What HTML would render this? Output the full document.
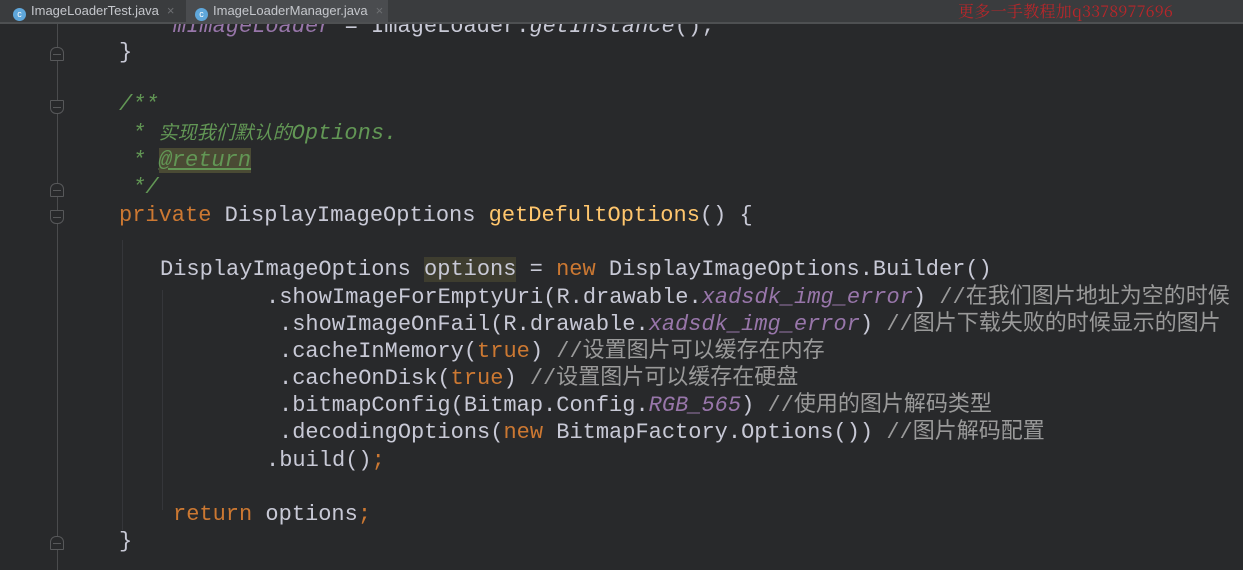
<!DOCTYPE html>
<html><head><meta charset="utf-8"><style>
html,body{margin:0;padding:0}
body{width:1243px;height:570px;background:#28292b;position:relative;overflow:hidden;font-family:"Liberation Mono","Noto Sans CJK SC",monospace;font-size:22px;color:#c8c9d6}
.tabs{position:absolute;left:0;top:0;width:1243px;height:22px;background:#3a3c3e;border-bottom:2px solid #4e5052;font-family:"Liberation Sans",sans-serif;font-size:13px;color:#c5c7cc;z-index:2}
.tab{position:absolute;top:0;height:22px;line-height:22px}
.ic{display:inline-block;width:13px;height:13px;border-radius:50%;background:#5fa7db;color:#fff;font-size:9px;line-height:13px;text-align:center;vertical-align:-2px;margin-right:5px}
.x{color:#6d6f72;margin-left:8px}
.wm{position:absolute;left:958px;top:2px;color:#b8262a;font-family:"Noto Serif CJK SC",serif;font-size:16px;line-height:18px;letter-spacing:0.3px}
.l{position:absolute;white-space:pre;line-height:26px;height:26px}
.k{color:#cc7832}.m{color:#ffc66d}.g{color:#629755;font-style:italic}.p{color:#9876aa;font-style:italic}.c{color:#9a9a9a}
.cj{font-size:19px}
.gut{position:absolute;left:57px;top:24px;width:1px;height:546px;background:#4a4b4d}
.fold{position:absolute;left:50px;width:14px;height:14px;border:1px solid #57585a;background:#28292b;box-sizing:border-box}
.fold:after{content:"";position:absolute;left:2px;right:2px;top:6px;height:1px;background:#57585a}
.ig{position:absolute;width:1px;background:#35363a}
</style></head><body>
<div class="tabs">
<div class="tab" style="left:13px"><span class="ic">c</span>ImageLoaderTest.java<span class="x">×</span></div>
<div class="tab" style="left:186px;width:202px;background:#4a4c4f;padding-left:9px;box-sizing:border-box"><span class="ic">c</span>ImageLoaderManager.java<span class="x">×</span></div>
<div class="wm">更多一手教程加q3378977696</div>
</div>
<div class="gut"></div>
<div class="fold" style="top:47px;border-radius:6px 6px 1px 1px"></div>
<div class="fold" style="top:100px;border-radius:1px 1px 6px 6px"></div>
<div class="fold" style="top:183px;border-radius:6px 6px 1px 1px"></div>
<div class="fold" style="top:210px;border-radius:1px 1px 6px 6px"></div>
<div class="fold" style="top:536px;border-radius:6px 6px 1px 1px"></div>
<div class="ig" style="left:122px;top:240px;height:290px"></div>
<div class="ig" style="left:162px;top:290px;height:220px"></div>

<div class="l" style="left:173px;top:14px"><span class="p">mImageLoader</span> = ImageLoader.<i>getInstance</i>();</div>
<div class="l" style="left:119px;top:40px">}</div>
<div class="l g" style="left:119px;top:92px">/**</div>
<div class="l g" style="left:119px;top:121px"> * <span class="cj">实现我们默认的</span>Options.</div>
<div class="l g" style="left:119px;top:148px"> * <span style="background:#4a4a34;text-decoration:underline">@return</span></div>
<div class="l g" style="left:119px;top:175px"> */</div>
<div class="l" style="left:119px;top:203px"><span class="k">private</span> DisplayImageOptions <span class="m">getDefultOptions</span>() {</div>
<div class="l" style="left:160px;top:257px">DisplayImageOptions <span style="background:#3e3d2f">options</span> = <span class="k">new</span> DisplayImageOptions.Builder()</div>
<div class="l" style="left:266px;top:285px">.showImageForEmptyUri(R.drawable.<span class="p">xadsdk_img_error</span>) <span class="c">//在我们图片地址为空的时候</span></div>
<div class="l" style="left:279px;top:312px">.showImageOnFail(R.drawable.<span class="p">xadsdk_img_error</span>) <span class="c">//图片下载失败的时候显示的图片</span></div>
<div class="l" style="left:279px;top:339px">.cacheInMemory(<span class="k">true</span>) <span class="c">//设置图片可以缓存在内存</span></div>
<div class="l" style="left:279px;top:366px">.cacheOnDisk(<span class="k">true</span>) <span class="c">//设置图片可以缓存在硬盘</span></div>
<div class="l" style="left:279px;top:393px">.bitmapConfig(Bitmap.Config.<span class="p">RGB_565</span>) <span class="c">//使用的图片解码类型</span></div>
<div class="l" style="left:279px;top:420px">.decodingOptions(<span class="k">new</span> BitmapFactory.Options()) <span class="c">//图片解码配置</span></div>
<div class="l" style="left:266px;top:448px">.build()<span class="k">;</span></div>
<div class="l" style="left:173px;top:502px"><span class="k">return</span> options<span class="k">;</span></div>
<div class="l" style="left:119px;top:529px">}</div>
</body></html>
